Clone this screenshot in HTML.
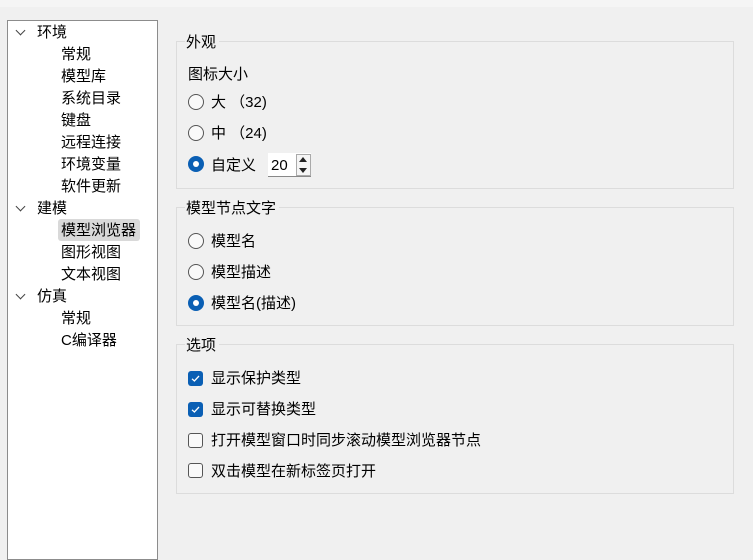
<!DOCTYPE html>
<html><head><meta charset="utf-8"><style>
*{margin:0;padding:0;box-sizing:border-box}
body{width:753px;height:554px;background:#f0f0f0;position:relative;overflow:hidden;font-family:"Liberation Sans","Noto Sans CJK SC",sans-serif;font-size:15px;color:#000}
.top{position:absolute;left:0;top:0;width:753px;height:7px;background:#f5f5f5}
.tree{position:absolute;left:7px;top:20px;width:151px;height:540px;background:#fff;border:1px solid #8c8c8c}
.t{position:absolute;line-height:22px;white-space:nowrap;margin-top:1px}
.chev{position:absolute;width:7px;height:7px;border-right:1.3px solid #444;border-bottom:1.3px solid #444;transform:rotate(45deg)}
.sel{position:absolute;left:50px;top:198px;width:82px;height:22px;background:#d9d9d9;border-radius:3px}
.gb{position:absolute;left:176px;width:558px;border:1px solid #dcdcdc}
.gt{position:absolute;left:185px;background:#f0f0f0;padding:0 3px 0 1px;line-height:18px;margin-top:1px}
.r{position:absolute;width:16px;height:16px;border-radius:50%;border:1px solid #555;background:#f9f9f9}
.r.on{border:none;background:#0a5fb4}
.r.on::after{content:"";position:absolute;left:5px;top:5px;width:6px;height:6px;border-radius:50%;background:#fff}
.c{position:absolute;width:15px;height:15px;border-radius:3px;border:1px solid #555;background:#f9f9f9}
.c.on{border:none;background:#0a5fb4}
.l{position:absolute;line-height:18px;white-space:nowrap;margin-top:1px}
</style></head><body>
<div class="top"></div>
<div class="tree">
<div class="sel"></div>
<div class="chev" style="left:9px;top:6px"></div>
<div class="t" style="left:29px;top:0">环境</div>
<div class="t" style="left:53px;top:22px">常规</div>
<div class="t" style="left:53px;top:44px">模型库</div>
<div class="t" style="left:53px;top:66px">系统目录</div>
<div class="t" style="left:53px;top:88px">键盘</div>
<div class="t" style="left:53px;top:110px">远程连接</div>
<div class="t" style="left:53px;top:132px">环境变量</div>
<div class="t" style="left:53px;top:154px">软件更新</div>
<div class="chev" style="left:9px;top:182px"></div>
<div class="t" style="left:29px;top:176px">建模</div>
<div class="t" style="left:53px;top:198px">模型浏览器</div>
<div class="t" style="left:53px;top:220px">图形视图</div>
<div class="t" style="left:53px;top:242px">文本视图</div>
<div class="chev" style="left:9px;top:270px"></div>
<div class="t" style="left:29px;top:264px">仿真</div>
<div class="t" style="left:53px;top:286px">常规</div>
<div class="t" style="left:53px;top:308px">C编译器</div>
</div>

<div class="gb" style="top:41px;height:148px"></div>
<div class="gt" style="top:33px">外观</div>
<div class="l" style="left:188px;top:65px">图标大小</div>
<div class="r" style="left:188px;top:94px"></div><div class="l" style="left:211px;top:93px">大 （32)</div>
<div class="r" style="left:188px;top:125px"></div><div class="l" style="left:211px;top:124px">中 （24)</div>
<div class="r on" style="left:188px;top:156px"></div><div class="l" style="left:211px;top:156px">自定义</div>
<div style="position:absolute;left:268px;top:153px;width:43px;height:24px;background:#fff;border-bottom:1px solid #888"></div>
<div class="l" style="left:271px;top:156px;font-size:15px">20</div>
<div style="position:absolute;left:296px;top:154px;width:15px;height:22px;border:1px solid #aaa;background:#f5f5f5"></div>
<div style="position:absolute;left:299px;top:157px;border-left:4px solid transparent;border-right:4px solid transparent;border-bottom:5px solid #222"></div>
<div style="position:absolute;left:299px;top:168px;border-left:4px solid transparent;border-right:4px solid transparent;border-top:5px solid #222"></div>

<div class="gb" style="top:207px;height:119px"></div>
<div class="gt" style="top:199px">模型节点文字</div>
<div class="r" style="left:188px;top:233px"></div><div class="l" style="left:211px;top:232px">模型名</div>
<div class="r" style="left:188px;top:264px"></div><div class="l" style="left:211px;top:263px">模型描述</div>
<div class="r on" style="left:188px;top:295px"></div><div class="l" style="left:211px;top:294px">模型名(描述)</div>

<div class="gb" style="top:344px;height:150px"></div>
<div class="gt" style="top:336px">选项</div>
<div class="c on" style="left:188px;top:371px"><svg width="15" height="15"><path d="M4 7.8 L6.4 10 L11 5" fill="none" stroke="#fff" stroke-width="1.3"/></svg></div><div class="l" style="left:211px;top:369px">显示保护类型</div>
<div class="c on" style="left:188px;top:402px"><svg width="15" height="15"><path d="M4 7.8 L6.4 10 L11 5" fill="none" stroke="#fff" stroke-width="1.3"/></svg></div><div class="l" style="left:211px;top:400px">显示可替换类型</div>
<div class="c" style="left:188px;top:433px"></div><div class="l" style="left:211px;top:431px">打开模型窗口时同步滚动模型浏览器节点</div>
<div class="c" style="left:188px;top:463px"></div><div class="l" style="left:211px;top:462px">双击模型在新标签页打开</div>
</body></html>
